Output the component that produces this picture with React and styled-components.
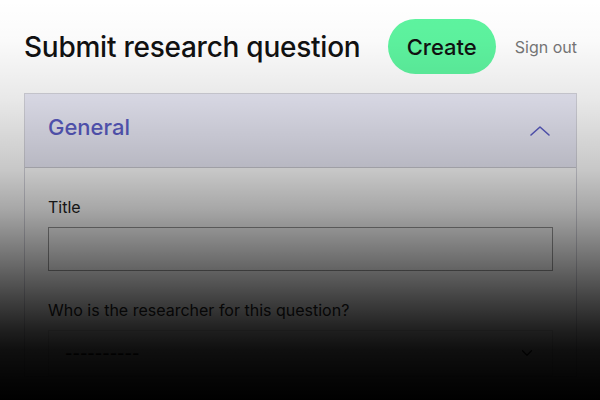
import React from 'react';
import styled, { createGlobalStyle } from 'styled-components';

const GlobalStyle = createGlobalStyle`
    html, body {
        margin: 0;
        padding: 0;
        background: #fff;
        font-family: Inter, "Noto Sans", sans-serif;
        color: #111;
    }
    * { box-sizing: border-box; }
`;

const Page = styled.div`
    position: relative;
    width: 600px;
    height: 400px;
    overflow: hidden;
    padding: 19px 23px 0 24px;
`;

// dark fade over the lower part of the shot
const Fade = styled.div`
    position: absolute;
    inset: 0;
    pointer-events: none;
    background: linear-gradient(
        to bottom,
        rgba(0, 0, 0, 0) 0%,
        rgba(0, 0, 0, 0.02) 10%,
        rgba(0, 0, 0, 0.09) 25%,
        rgba(0, 0, 0, 0.22) 42.5%,
        rgba(0, 0, 0, 0.35) 52.5%,
        rgba(0, 0, 0, 0.57) 65%,
        rgba(0, 0, 0, 0.75) 75%,
        rgba(0, 0, 0, 0.88) 82.5%,
        rgba(0, 0, 0, 0.94) 87.5%,
        rgba(0, 0, 0, 0.98) 95%,
        rgba(0, 0, 0, 1) 100%
    );
`;

const Header = styled.header`
    display: flex;
    align-items: center;
    height: 55px;
`;

const Title = styled.h1`
    margin: 0;
    font-size: 28px;
    font-weight: 500;
    letter-spacing: -0.25px;
    flex: 1;
`;

const CreateButton = styled.button`
    height: 55px;
    padding: 0 19px;
    border: none;
    border-radius: 28px;
    background: #5ef5a0;
    font-family: inherit;
    font-size: 22px;
    font-weight: 500;
    color: #111;
`;

const SignOut = styled.a`
    margin-left: 19px;
    font-size: 16px;
    color: #777;
`;

const Panel = styled.section`
    margin-top: 19px;
    border: 1px solid #d4d4dc;
`;

const PanelHead = styled.div`
    display: flex;
    align-items: center;
    justify-content: space-between;
    height: 74px;
    padding: 0 24px 0 23px;
    background: #eaeaf7;
    border-bottom: 1px solid #cacad2;
`;

const PanelTitle = styled.h2`
    margin: 0 0 8px;
    font-size: 22px;
    font-weight: 500;
    color: #5a5cc4;
`;

const PanelBody = styled.div`
    padding: 29px 23px 0;
    display: flex;
    flex-direction: column;
`;

const Label = styled.label`
    font-size: 16px;
    color: #222;
    margin-bottom: 10px;
`;

const Input = styled.div`
    height: 44px;
    border: 1px solid #9a9a9a;
    background: #fff;
    margin-bottom: 29px;
`;

const Select = styled.div`
    height: 46px;
    border: 1px solid #ddd;
    display: flex;
    align-items: center;
    justify-content: space-between;
    padding: 0 16px;
    font-size: 16px;
    font-weight: 600;
    color: #111;
`;

const Chevron = ({ up, color, size = 22 }) => (
    <svg width={size} height={size} viewBox="0 0 24 24" fill="none" stroke={color} strokeWidth="1.6" strokeLinecap="round" strokeLinejoin="round">
        <path d={up ? 'M3 16l9-8 9 8' : 'M6 9l6 6 6-6'} />
    </svg>
);

export default function App() {
    return (
        <Page>
            <GlobalStyle />
            <Header>
                <Title>Submit research question</Title>
                <CreateButton>Create</CreateButton>
                <SignOut>Sign out</SignOut>
            </Header>
            <Panel>
                <PanelHead>
                    <PanelTitle>General</PanelTitle>
                    <Chevron up color="#5a5cc4" size={24} />
                </PanelHead>
                <PanelBody>
                    <Label>Title</Label>
                    <Input />
                    <Label>Who is the researcher for this question?</Label>
                    <Select>
                        <span>----------</span>
                        <Chevron color="#111" size={18} />
                    </Select>
                </PanelBody>
            </Panel>
            <Fade />
        </Page>
    );
}
